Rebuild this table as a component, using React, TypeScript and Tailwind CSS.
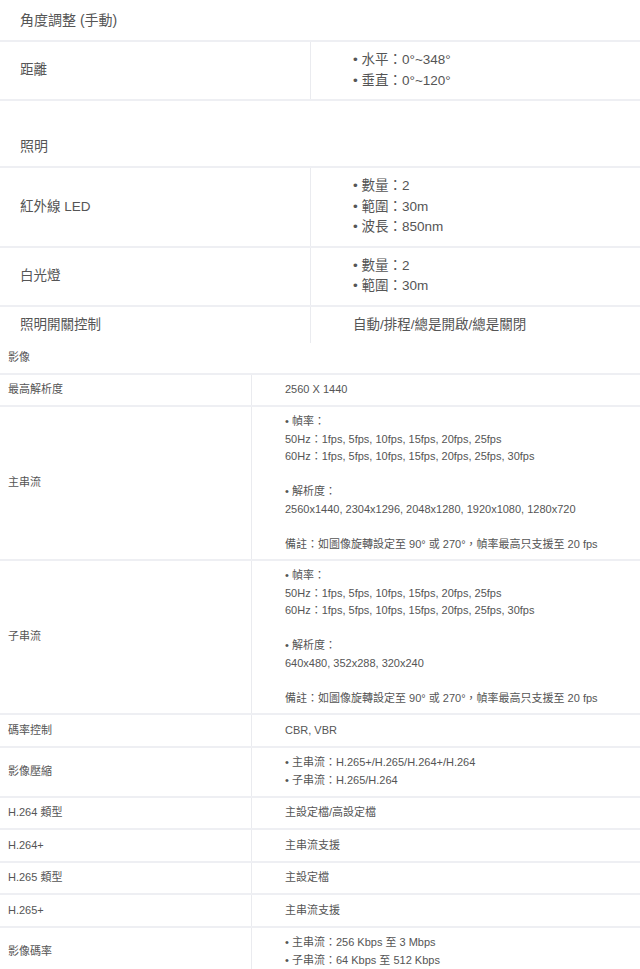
import type { ReactNode } from 'react'

const font = { fontFamily: '"Liberation Sans", "Noto Sans CJK TC", sans-serif' }

type Row = { label: string; value: ReactNode; tall?: boolean }

function Bullets({ items }: { items: string[] }) {
  return (
    <>
      {items.map((t) => (
        <div key={t}>• {t}</div>
      ))}
    </>
  )
}

const lighting: Row[] = [
  { label: '紅外線 LED', value: <Bullets items={['數量：2', '範圍：30m', '波長：850nm']} /> },
  { label: '白光燈', value: <Bullets items={['數量：2', '範圍：30m']} /> },
]

const mainStream = (
  <>
    <div>• 幀率：</div>
    <div>50Hz：1fps, 5fps, 10fps, 15fps, 20fps, 25fps</div>
    <div>60Hz：1fps, 5fps, 10fps, 15fps, 20fps, 25fps, 30fps</div>
    <div>&nbsp;</div>
    <div>• 解析度：</div>
    <div>2560x1440, 2304x1296, 2048x1280, 1920x1080, 1280x720</div>
    <div>&nbsp;</div>
    <div>備註：如圖像旋轉設定至 90° 或 270°，幀率最高只支援至 20 fps</div>
  </>
)

const subStream = (
  <>
    <div>• 幀率：</div>
    <div>50Hz：1fps, 5fps, 10fps, 15fps, 20fps, 25fps</div>
    <div>60Hz：1fps, 5fps, 10fps, 15fps, 20fps, 25fps, 30fps</div>
    <div>&nbsp;</div>
    <div>• 解析度：</div>
    <div>640x480, 352x288, 320x240</div>
    <div>&nbsp;</div>
    <div>備註：如圖像旋轉設定至 90° 或 270°，幀率最高只支援至 20 fps</div>
  </>
)

const video: Row[] = [
  { label: '最高解析度', value: '2560 X 1440' },
  { label: '主串流', value: mainStream, tall: true },
  { label: '子串流', value: subStream, tall: true },
  { label: '碼率控制', value: 'CBR, VBR' },
  { label: '影像壓縮', value: <Bullets items={['主串流：H.265+/H.265/H.264+/H.264', '子串流：H.265/H.264']} /> },
  { label: 'H.264 類型', value: '主設定檔/高設定檔' },
  { label: 'H.264+', value: '主串流支援' },
  { label: 'H.265 類型', value: '主設定檔' },
  { label: 'H.265+', value: '主串流支援' },
  { label: '影像碼率', value: <Bullets items={['主串流：256 Kbps 至 3 Mbps', '子串流：64 Kbps 至 512 Kbps']} /> },
]

function BigHeading({ children }: { children: ReactNode }) {
  return <div className="h-[42px] flex items-center pl-5 border-b-2 border-[#eeeff3] text-[14px]">{children}</div>
}

function BigRow({ label, value, last }: Row & { last?: boolean }) {
  return (
    <div className={'grid grid-cols-[310px_1fr] text-[13.5px] leading-[20.5px] ' + (last ? '' : 'border-b-2 border-[#eeeff3]')}>
      <div className="flex items-center pl-5 py-2">{label}</div>
      <div className="border-l border-[#eaebef] pl-[42px] py-2">{value}</div>
    </div>
  )
}

function SmallRow({ label, value, tall }: Row) {
  return (
    <div className="grid grid-cols-[251px_1fr] text-[11px] leading-[17.5px] border-b-2 border-[#eeeff3]">
      <div className="flex items-center pl-2 py-[6px]">{label}</div>
      <div className={'border-l border-[#eaebef] pl-[33px] ' + (tall ? 'pt-[6px] pb-[6px]' : 'py-[6.5px]')}>{value}</div>
    </div>
  )
}

export default function App() {
  return (
    <div className="w-[640px] h-[969px] overflow-hidden bg-white text-[#555]" style={font}>
      {/* 角度 */}
      <BigHeading>角度調整 (手動)</BigHeading>
      <BigRow label="距離" value={<Bullets items={['水平：0°~348°', '垂直：0°~120°']} />} />

      {/* 照明 */}
      <div className="mt-[25px]">
        <BigHeading>照明</BigHeading>
        {lighting.map((r) => (
          <BigRow key={r.label} {...r} />
        ))}
        <BigRow label="照明開關控制" value="自動/排程/總是開啟/總是關閉" last />
      </div>

      {/* 影像 */}
      <div className="pl-2 py-[6px] text-[11px] leading-[17.5px] border-b-2 border-[#eeeff3]">影像</div>
      {video.map((r) => (
        <SmallRow key={r.label} {...r} />
      ))}
    </div>
  )
}
